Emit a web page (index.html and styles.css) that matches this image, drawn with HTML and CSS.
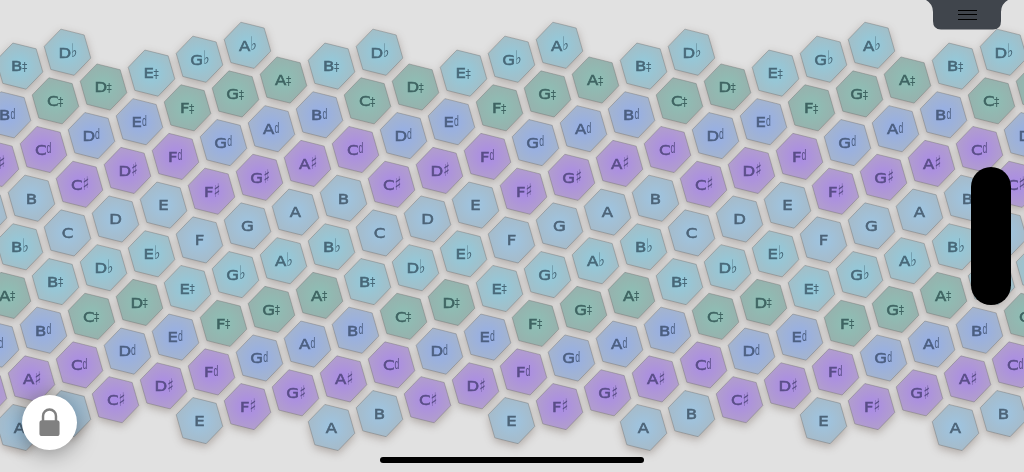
FILE: index.html
```html
<!DOCTYPE html>
<html lang="en">
<head>
<meta charset="utf-8">
<title>Hex keyboard</title>
<link rel="stylesheet" href="styles.css">
</head>
<body>
<main class="stage">
  <svg class="board" viewBox="0 0 1024 472" width="1024" height="472" aria-label="31-tone hexagonal keyboard">
    <defs>
      <radialGradient id="g-natural" r=".55"><stop offset="0" stop-color="#9dc5e3"/><stop offset="1" stop-color="#a7bac7"/></radialGradient>
      <radialGradient id="g-sharp" r=".55"><stop offset="0" stop-color="#a98ae8"/><stop offset="1" stop-color="#b2a0ca"/></radialGradient>
      <radialGradient id="g-half-flat" r=".55"><stop offset="0" stop-color="#94aee9"/><stop offset="1" stop-color="#a6b5cb"/></radialGradient>
      <radialGradient id="g-half-sharp" r=".55"><stop offset="0" stop-color="#8cc0b6"/><stop offset="1" stop-color="#98b0ac"/></radialGradient>
      <radialGradient id="g-flat" r=".55"><stop offset="0" stop-color="#90cbde"/><stop offset="1" stop-color="#a5bdc5"/></radialGradient>
    </defs>
    <g class="keys" id="keys"></g>
    <g class="labels" id="labels"></g>
  </svg>
  <div class="menu-tab">
    <svg class="menu-shape" viewBox="0 0 82 30" width="82" height="30"><path d="M0 0Q7 4 7 12V21Q7 29.5 15 29.5H67Q75 29.5 75 21V12Q75 4 82 0Z"/></svg>
    <div class="burger"><span></span><span></span><span></span></div>
  </div>
  <div class="side-pill"></div>
  <button class="lock" aria-label="Lock">
    <svg viewBox="0 0 24 32" width="21" height="29"><path class="lock-shackle" d="M4.6 15V8.6a7.4 7.4 0 0 1 14.8 0V15"/><rect class="lock-body" x="0.5" y="13.5" width="23" height="18" rx="3"/></svg>
  </button>
  <div class="home-bar"></div>
</main>
<script src="app.js"></script>
</body>
</html>
```
FILE: styles.css
```css
* { box-sizing: border-box; }
html, body { margin: 0; height: 100%; }
body { background: #e1e1e1; overflow: hidden; }
.stage { position: relative; width: 1024px; height: 472px; overflow: hidden; }
.board { display: block; }
.keys { filter: drop-shadow(0 3px 4px rgba(95, 75, 65, .38)); }
.hex { stroke: rgba(105, 105, 105, .38); stroke-width: 1; }
.labels { filter: blur(.25px); }
.note { font-family: "DejaVu Sans", sans-serif; font-weight: 400; font-size: 14px; stroke: currentColor; stroke-width: .55px; }
.acc { font-family: "DejaVu Sans", sans-serif; font-weight: 400; font-size: 19px; }
.acc-dagger { font-family: "DejaVu Sans", sans-serif; font-weight: 400; font-size: 12.5px; }
.acc-hf { font-family: "Liberation Sans", sans-serif; font-weight: 400; font-size: 14px; }
.t-natural { fill: #4d6478; color: #4d6478; }
.t-sharp { fill: #5a4e88; color: #5a4e88; }
.t-half-flat { fill: #4c5f80; color: #4c5f80; }
.t-half-sharp { fill: #3f6462; color: #3f6462; }
.t-flat { fill: #486878; color: #486878; }
.menu-tab { position: absolute; top: 0; left: 926px; width: 82px; height: 30px; }
.menu-shape { display: block; fill: #40454c; }
.burger { position: absolute; top: 10px; left: 32px; width: 19px; display: flex; flex-direction: column; gap: 3.4px; }
.burger span { display: block; height: 1px; background: #000; }
.side-pill { position: absolute; left: 971px; top: 167px; width: 40px; height: 138px; border-radius: 20px; background: #000; }
.lock { position: absolute; left: 22px; top: 394.5px; width: 55px; height: 55px; padding: 0; border: 0; border-radius: 50%; background: #fff; box-shadow: 0 3px 22px rgba(0, 0, 0, .4); display: flex; align-items: center; justify-content: center; }
.lock-shackle { fill: none; stroke: #808080; stroke-width: 2.8; }
.lock-body { fill: #808080; }
.home-bar { position: absolute; left: 380px; top: 457px; width: 264px; height: 5.5px; border-radius: 3px; background: #000; }
```
FILE: app.js
```js
// 31-tone spiral of fifths laid out on a hexagonal lattice.
var FIFTHS = [
  ['D','♭','flat'],['A','♭','flat'],['E','♭','flat'],['B','♭','flat'],
  ['F','','natural'],['C','','natural'],['G','','natural'],['D','','natural'],['A','','natural'],['E','','natural'],['B','','natural'],
  ['F','♯','sharp'],['C','♯','sharp'],['G','♯','sharp'],['D','♯','sharp'],['A','♯','sharp'],
  ['F','d','sharp'],['C','d','sharp'],['G','d','half-flat'],['D','d','half-flat'],['A','d','half-flat'],['E','d','half-flat'],['B','d','half-flat'],
  ['F','‡','half-sharp'],['C','‡','half-sharp'],['G','‡','half-sharp'],['D','‡','half-sharp'],['A','‡','half-sharp'],
  ['E','‡','flat'],['B','‡','flat'],['G','♭','flat']
];
var NS = 'http://www.w3.org/2000/svg';
var keys = document.getElementById('keys');
var labels = document.getElementById('labels');
var R = 24, pts = [];
for (var k = 0; k < 6; k++) {
  var t = (14 + 60 * k) * Math.PI / 180;
  pts.push((R * Math.cos(t)).toFixed(2) + ',' + (R * Math.sin(t)).toFixed(2));
}
function el(name, attrs, parent, text) {
  var e = document.createElementNS(NS, name);
  for (var a in attrs) e.setAttribute(a, attrs[a]);
  if (text) e.textContent = text;
  parent.appendChild(e);
  return e;
}
var SX = 1.18;
for (var n = 1; n >= -54; n--) {
  var note = FIFTHS[((n % 31) + 31) % 31];
  var y = 52.2 - 6.95 * n;
  var x0 = (((67.5 + 180 * n) % 312) + 312) % 312;
  for (var x = x0 - 312; x < 1060; x += 312) {
    if (x < -30) continue;
    el('polygon', { points: pts.join(' '), 'class': 'hex', fill: 'url(#g-' + note[2] + ')', transform: 'translate(' + x.toFixed(1) + ' ' + y.toFixed(1) + ')' }, keys);
    var g = el('g', { 'class': 't-' + note[2], transform: 'translate(' + x.toFixed(1) + ' ' + (y + 5.3).toFixed(1) + ')' }, labels);
    var letter = el('text', { 'class': 'note' }, g, note[0]);
    var w = letter.getComputedTextLength() * SX;
    var aw = note[1] ? 5.5 : 0;
    var ax = (w - aw) / 2;
    letter.setAttribute('transform', 'translate(' + (-(w + aw) / 2).toFixed(2) + ' 0) scale(' + SX + ' 1)');
    if (note[1] === 'd') {
      el('text', { 'class': 'acc-hf', transform: 'translate(' + ax.toFixed(2) + ' -1.5) scale(.62 1)' }, g, 'd');
    } else if (note[1] === '‡') {
      el('text', { 'class': 'acc-dagger', transform: 'translate(' + (ax - 0.5).toFixed(2) + ' -0.5) scale(.85 1.05)' }, g, '‡');
    } else if (note[1] === '♯') {
      el('text', { 'class': 'acc', transform: 'translate(' + ax.toFixed(2) + ' 0.5) scale(.72 1)' }, g, '♯');
    } else if (note[1] === '♭') {
      el('text', { 'class': 'acc', transform: 'translate(' + ax.toFixed(2) + ' -0.5) scale(.72 1)' }, g, '♭');
    }
  }
}
```
